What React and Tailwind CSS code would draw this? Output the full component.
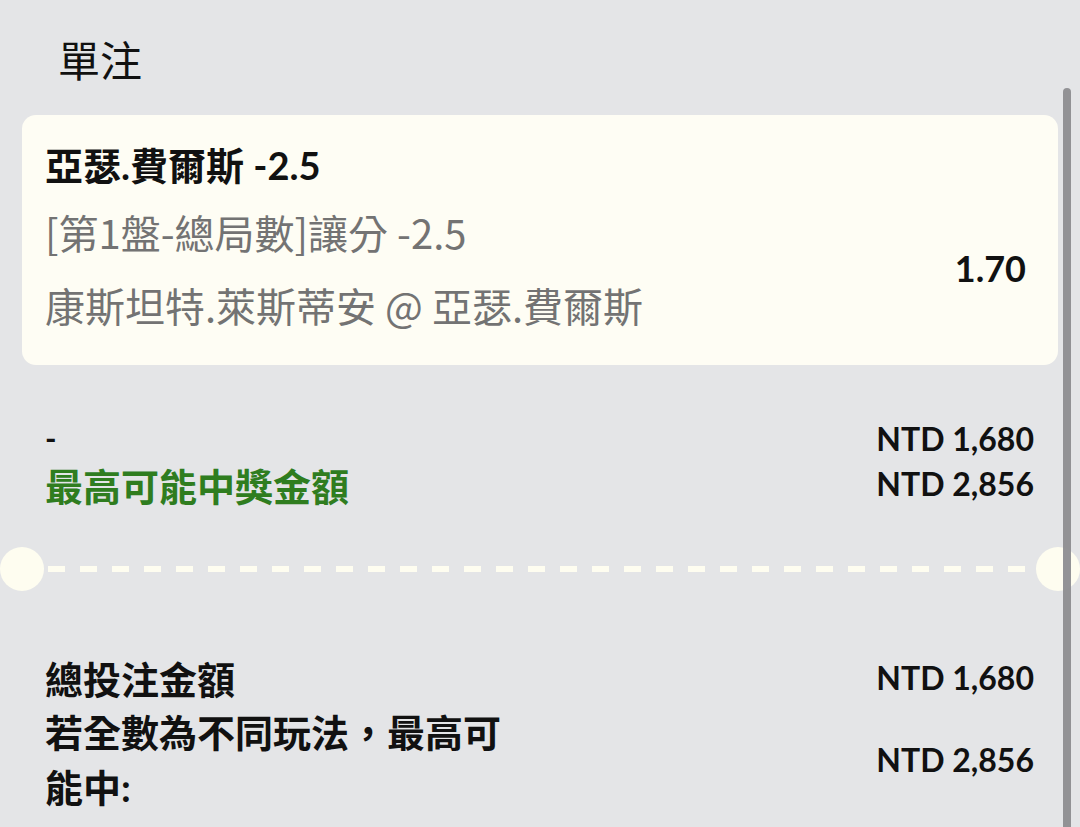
import React from "react";

const latin = "font-['Lato','Noto_Sans_CJK_TC',sans-serif]";
const cjk = "font-['Noto_Sans_CJK_TC',sans-serif]";

const BetCard = () => (
  <div className="mx-[22px] mt-[31px] flex justify-between rounded-[14px] bg-[#fefdf4] pl-[23px] pr-[32px]">
    <div className="pt-[28px] pb-[38px]">
      <div className={`${latin} text-[38px] font-bold leading-[44px] text-[#111]`}>亞瑟.費爾斯 -2.5</div>
      <div className={`${cjk} mt-[23px] text-[40px] leading-[44px] text-[#737373]`}>[第1盤-總局數]讓分 -2.5</div>
      <div className={`${cjk} mt-[29px] text-[40px] leading-[44px] text-[#737373]`}>康斯坦特.萊斯蒂安 @ 亞瑟.費爾斯</div>
    </div>
    <div className={`${latin} pt-[135px] text-[36px] font-bold leading-[36px] text-[#111]`}>1.70</div>
  </div>
);

const Divider = () => (
  <div className="relative mt-[40px] h-[44px]">
    <div className="absolute left-0 top-0 h-[44px] w-[44px] rounded-full bg-[#fefdf0]" />
    <div className="absolute left-[48px] right-[48px] top-[19px] h-[6px] bg-[repeating-linear-gradient(90deg,#fefdf0_0_17px,transparent_17px_32px)]" />
    <div className="absolute left-[1036px] top-0 h-[44px] w-[44px] rounded-full bg-[#fefdf0]" />
  </div>
);

export default function App() {
  return (
    <div className="relative h-[827px] w-[1080px] overflow-hidden bg-[#e4e5e7]">
      <div className={`${cjk} pl-[58px] pt-[34px] text-[42px] leading-[50px] text-[#111]`}>單注</div>

      <BetCard />

      {/* potential win */}
      <div className="mt-[51px] flex justify-between pl-[45px] pr-[46px]">
        <div>
          <div className={`${latin} text-[31px] font-bold leading-[44px] text-[#111]`}>-</div>
          <div className={`${cjk} mt-[3px] text-[38px] font-bold leading-[44px] text-[#2f7d1f]`}>最高可能中獎金額</div>
        </div>
        <div className={`${latin} text-right text-[32px] font-bold leading-[45px] text-[#111]`}>
          <div>NTD 1,680</div>
          <div>NTD 2,856</div>
        </div>
      </div>

      <Divider />

      {/* totals */}
      <div className="mt-[59px] pl-[45px] pr-[46px]">
        <div className="flex items-center justify-between">
          <div className={`${cjk} text-[38px] font-bold leading-[55px] text-[#111]`}>總投注金額</div>
          <div className={`${latin} text-[32px] font-bold text-[#111]`}>NTD 1,680</div>
        </div>
        <div className="flex items-center justify-between">
          <div className={`${latin} w-[480px] text-[38px] font-bold leading-[55px] text-[#111]`}>若全數為不同玩法，最高可能中:</div>
          <div className={`${latin} text-[32px] font-bold text-[#111]`}>NTD 2,856</div>
        </div>
      </div>

      {/* scrollbar */}
      <div className="absolute left-[1063px] top-[88px] h-[760px] w-[8px] rounded-full bg-[#8d8d90]/95" />
    </div>
  );
}
